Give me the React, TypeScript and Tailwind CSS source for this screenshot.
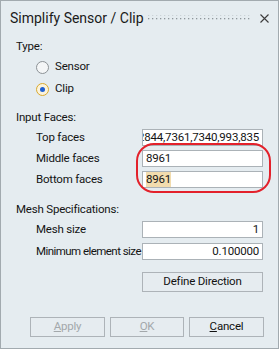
import React from "react";

function Radio({ checked, label }: { checked?: boolean; label: string }) {
    return (
        <div className="flex items-center h-[22px] pl-[35px]">
            {checked ? (
                <div className="w-[13px] h-[13px] rounded-full border border-[#d9a92e] bg-[#fbf3dc] flex items-center justify-center">
                    <div className="w-[5px] h-[5px] rounded-full bg-[#1f5fd1]" />
                </div>
            ) : (
                <div className="w-[13px] h-[13px] rounded-full border border-[#8c9296] bg-[#f4f6f7]" />
            )}
            <span className="ml-[6px]">{label}</span>
        </div>
    );
}

function Field({ label, children, right, tight }: { label: string; children: React.ReactNode; right?: boolean; tight?: boolean }) {
    return (
        <div className="flex items-center h-[17px]">
            <span className={`w-[141px] shrink-0 pl-[35px] whitespace-nowrap ${tight ? "tracking-[-0.55px]" : ""}`}>{label}</span>
            <div className={`w-[121px] shrink-0 h-[17px] border border-[#abb2b7] bg-white flex items-center overflow-hidden whitespace-nowrap px-[3px] ${right ? "justify-end" : "justify-start"}`}>
                {children}
            </div>
        </div>
    );
}

function Btn({ children, disabled, className = "" }: { children: React.ReactNode; disabled?: boolean; className?: string }) {
    return (
        <div className={`h-[20px] border border-[#adb3b8] bg-[#e6ecf0] flex items-center justify-center ${disabled ? "text-[#a3a8ab]" : "text-[#111]"} ${className}`}>
            {children}
        </div>
    );
}

export default function App() {
    return (
        <div className="relative w-[279px] h-[349px] border border-[#a2aaaf] bg-[#e5ecf0] text-[11.5px] tracking-[-0.2px] text-[#141414] flex flex-col" style={{ fontFamily: 'Roboto, "Liberation Sans", Arial, sans-serif' }}>
            {/* title bar */}
            <div className="flex items-center h-[36px] pl-[9px] pr-[9px] -mt-[1px]">
                <span className="text-[14px] tracking-normal text-[#1a1a1a] whitespace-nowrap">Simplify Sensor / Clip</span>
                <svg className="ml-auto" width="104" height="8" viewBox="0 0 104 8">
                    <defs>
                        <pattern id="dots" width="4" height="4" patternUnits="userSpaceOnUse">
                            <rect x="0" y="0" width="1.3" height="1.3" fill="#8e959a" />
                        </pattern>
                    </defs>
                    <rect x="0" y="1" width="104" height="6" fill="url(#dots)" />
                </svg>
                <svg className="ml-[8px]" width="9" height="9" viewBox="0 0 9 9">
                    <path d="M0.5 0.5 L8.5 8.5 M8.5 0.5 L0.5 8.5" stroke="#3c3c3c" strokeWidth="1.1" />
                </svg>
            </div>

            <div className="pl-[15px] mt-[3px] h-[16px] flex items-center">Type:</div>
            <div className="mt-[1px]">
                <Radio label="Sensor" />
                <Radio checked label="Clip" />
            </div>

            <div className="pl-[15px] mt-[10px] h-[16px] flex items-center">Input Faces:</div>
            <div className="flex flex-col gap-[4px] mt-[3px]">
                <Field label="Top faces" right>
                    <span>8960,2844,7361,7340,993,835</span>
                </Field>
                <Field label="Middle faces">
                    <span>8961</span>
                </Field>
                <Field label="Bottom faces">
                    <span className="bg-[#f2dcae]">8961</span>
                </Field>
            </div>

            <div className="pl-[15px] mt-[14px] h-[16px] flex items-center">Mesh Specifications:</div>
            <div className="flex flex-col gap-[5px] mt-[3px]">
                <Field label="Mesh size" right>
                    <span>1</span>
                </Field>
                <Field label="Minimum element size" right tight>
                    <span>0.100000</span>
                </Field>
            </div>

            <div className="flex mt-[12px] pl-[141px]">
                <Btn className="w-[121px]">Define Direction</Btn>
            </div>

            <div className="flex mt-[25px] pl-[29px] gap-[5px]">
                <Btn disabled className="w-[75px]">
                    <span><span className="underline">A</span>pply</span>
                </Btn>
                <Btn disabled className="w-[74px]">
                    <span><span className="underline">O</span>K</span>
                </Btn>
                <Btn className="w-[75px]">
                    <span><span className="underline">C</span>ancel</span>
                </Btn>
            </div>

            {/* red annotation */}
            <div className="absolute left-[135px] top-[142px] w-[135px] h-[50px] border-[2.5px] border-[#e3212b] rounded-[18px] pointer-events-none" />
        </div>
    );
}
